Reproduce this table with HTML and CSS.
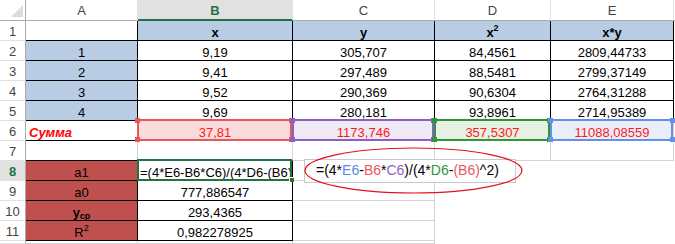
FILE: index.html
```html
<!DOCTYPE html>
<html lang="ru">
<head>
<meta charset="utf-8">
<title>Excel</title>
<link rel="stylesheet" href="styles.css">
</head>
<body>
<div class="sheet">
  <!-- header row -->
  <div class="c corner"><svg width="26" height="21" viewBox="0 0 26 21"><polygon points="23,5 23,17 11,17" fill="#dcdcdc"/></svg></div>
  <div class="c ch">A</div>
  <div class="c ch sel">B</div>
  <div class="c ch">C</div>
  <div class="c ch">D</div>
  <div class="c ch">E</div>
  <div class="c ch n"></div>

  <!-- row 1 -->
  <div class="c rh">1</div>
  <div class="c kr kb"></div>
  <div class="c kr kb blue b">x</div>
  <div class="c kr kb blue b">y</div>
  <div class="c kr kb blue b">x<sup>2</sup></div>
  <div class="c kr kb blue b">x*y</div>
  <div class="c n"></div>

  <!-- row 2 -->
  <div class="c rh">2</div>
  <div class="c kr kb blue">1</div>
  <div class="c kr kb">9,19</div>
  <div class="c kr kb">305,707</div>
  <div class="c kr kb">84,4561</div>
  <div class="c kr kb">2809,44733</div>
  <div class="c n"></div>

  <!-- row 3 -->
  <div class="c rh">3</div>
  <div class="c kr kb blue">2</div>
  <div class="c kr kb">9,41</div>
  <div class="c kr kb">297,489</div>
  <div class="c kr kb">88,5481</div>
  <div class="c kr kb">2799,37149</div>
  <div class="c n"></div>

  <!-- row 4 -->
  <div class="c rh">4</div>
  <div class="c kr kb blue">3</div>
  <div class="c kr kb">9,52</div>
  <div class="c kr kb">290,369</div>
  <div class="c kr kb">90,6304</div>
  <div class="c kr kb">2764,31288</div>
  <div class="c n"></div>

  <!-- row 5 -->
  <div class="c rh">5</div>
  <div class="c kr kb blue">4</div>
  <div class="c kr kb">9,69</div>
  <div class="c kr kb">280,181</div>
  <div class="c kr kb">93,8961</div>
  <div class="c kr kb">2714,95389</div>
  <div class="c n"></div>

  <!-- row 6 -->
  <div class="c rh">6</div>
  <div class="c kr kb sum">Сумма</div>
  <div class="c kb hl hl-red">37,81<span class="h tl"></span><span class="h tr"></span><span class="h bl"></span><span class="h br"></span></div>
  <div class="c kb hl hl-purple">1173,746<span class="h tl"></span><span class="h tr"></span><span class="h bl"></span><span class="h br"></span></div>
  <div class="c kb hl hl-green">357,5307<span class="h tl"></span><span class="h tr"></span><span class="h bl"></span><span class="h br"></span></div>
  <div class="c kb hl hl-blue">11088,08559<span class="h tl"></span><span class="h tr"></span><span class="h bl"></span><span class="h br"></span></div>
  <div class="c n"></div>

  <!-- row 7 -->
  <div class="c rh">7</div>
  <div class="c kb"></div>
  <div class="c kb"></div>
  <div class="c"></div>
  <div class="c"></div>
  <div class="c"></div>
  <div class="c n"></div>

  <!-- row 8 -->
  <div class="c rh rsel">8</div>
  <div class="c kr kb red">a1</div>
  <div class="c kr kb active"><span class="edit">=(4*E6-B6*C6)/(4*D6-(B6)^2)</span><span class="fill"></span></div>
  <div class="c"></div>
  <div class="c n"></div>
  <div class="c n"></div>
  <div class="c n"></div>

  <!-- row 9 -->
  <div class="c rh">9</div>
  <div class="c kr kb red">a0</div>
  <div class="c kr kb">777,886547</div>
  <div class="c"></div>
  <div class="c n"></div>
  <div class="c n"></div>
  <div class="c n"></div>

  <!-- row 10 -->
  <div class="c rh">10</div>
  <div class="c kr kb red"><b>y<sub>ср</sub></b></div>
  <div class="c kr kb">293,4365</div>
  <div class="c"></div>
  <div class="c n"></div>
  <div class="c n"></div>
  <div class="c n"></div>

  <!-- row 11 -->
  <div class="c rh">11</div>
  <div class="c kr kb red">R<sup>2</sup></div>
  <div class="c kr kb">0,982278925</div>
  <div class="c"></div>
  <div class="c n"></div>
  <div class="c n"></div>
  <div class="c n"></div>

  <!-- row 12 (partial) -->
  <div class="c rh"></div>
  <div class="c"></div>
  <div class="c"></div>
  <div class="c"></div>
  <div class="c n"></div>
  <div class="c n"></div>
  <div class="c n"></div>

  <!-- formula tooltip and hand-drawn oval -->
  <div class="tip">=(4*<span class="r-blue">E6</span>-<span class="r-red">B6</span>*<span class="r-purple">C6</span>)/(4*<span class="r-green">D6</span>-<span class="r-red">(B6)</span>^2)</div>
  <svg class="oval" width="675" height="244" viewBox="0 0 675 244"><ellipse cx="413.5" cy="170.5" rx="108.5" ry="22.5" fill="none" stroke="#e3121b" stroke-width="1.2"/></svg>
</div>
</body>
</html>
```

FILE: styles.css
```css
html, body {
  margin: 0;
  padding: 0;
  background: #ffffff;
}

.sheet {
  position: relative;
  display: grid;
  grid-template-columns: 26px 112px 155px 142px 116px 123px 1px;
  grid-template-rows: 21px repeat(11, 20px) 3px;
  width: 675px;
  height: 244px;
  overflow: hidden;
  font-family: "Liberation Sans", Arial, sans-serif;
  font-size: 13px;
  color: #000;
}

.c {
  position: relative;
  box-sizing: border-box;
  border-right: 1px solid #d4d4d4;
  border-bottom: 1px solid #d4d4d4;
  text-align: center;
  line-height: 19px;
  padding-top: 2px;
  white-space: nowrap;
}

.n {
  border-right: none;
  border-bottom-color: transparent;
}

/* headers */
.corner {
  padding: 0;
  border-right-color: #ababab;
  border-bottom-color: #ababab;
}
.corner svg { display: block; }

.ch {
  padding-top: 1px;
  color: #444444;
  border-right-color: #e1e1e1;
  border-bottom-color: #ababab;
}
.ch.n { border-bottom-color: #ababab; }
.ch.sel {
  background: #e1e1e1;
  color: #217346;
  font-weight: bold;
  border-bottom: 2px solid #217346;
}

.rh {
  padding-top: 1px;
  color: #444444;
  border-right-color: #ababab;
  border-bottom-color: #e1e1e1;
}
.rh.rsel {
  background: #e1e1e1;
  color: #217346;
  font-weight: bold;
}

/* table borders */
.kr { border-right-color: #000; }
.kb { border-bottom-color: #000; }

.blue { background: #b8cce4; }
.red { background: #c0504d; }
.b { font-weight: bold; }

sup, sub {
  font-size: 9px;
  line-height: 0;
}
sup { vertical-align: 6px; }
sub { vertical-align: -2px; }

.sum {
  text-align: left;
  padding-left: 3px;
  color: #ff0000;
  font-weight: bold;
  font-style: italic;
}

/* formula range highlights */
.hl { color: #ff1a1a; }
.hl::before {
  content: "";
  position: absolute;
  left: -1px;
  right: 0;
  top: -2px;
  bottom: -1px;
  border: 2px solid var(--hc);
  z-index: 1;
}
.hl-red { background: #fadcdc; --hc: #e8585b; }
.hl-purple { background: #efe9f6; --hc: #8c5fc2; }
.hl-green { background: #e6f0e3; --hc: #2e9638; }
.hl-blue { background: #e9eefa; --hc: #6491e6; }

.h {
  position: absolute;
  width: 5px;
  height: 5px;
  background: var(--hc);
  z-index: 2;
}
.h.tl { left: -3px; top: -3px; }
.h.tr { right: -2px; top: -3px; }
.h.bl { left: -3px; bottom: -2px; }
.h.br { right: -2px; bottom: -2px; }

/* active cell */
.active {
  text-align: left;
  padding-left: 2px;
  overflow: visible;
}
.active::before {
  content: "";
  position: absolute;
  left: -1px;
  right: 0;
  top: -2px;
  bottom: -1px;
  border: 2px solid #217346;
  z-index: 1;
}
.edit {
  display: block;
  overflow: hidden;
  width: 151px;
}
.fill {
  position: absolute;
  right: -2px;
  bottom: -2px;
  width: 4px;
  height: 4px;
  background: #217346;
  border: 1px solid #ffffff;
  border-right: none;
  border-bottom: none;
  z-index: 2;
}

/* tooltip-like formula box */
.tip {
  position: absolute;
  left: 304px;
  top: 159px;
  width: 212px;
  height: 24px;
  box-sizing: border-box;
  border: 1px solid #c8c8c8;
  background: #ffffff;
  padding-left: 11px;
  font-size: 14px;
  line-height: 21px;
  white-space: nowrap;
  z-index: 3;
}
.r-blue { color: #5b8ae6; }
.r-red { color: #e8585b; }
.r-purple { color: #8c5fc2; }
.r-green { color: #2e9638; }

.oval {
  position: absolute;
  left: 0;
  top: 0;
  z-index: 4;
  pointer-events: none;
}
```
